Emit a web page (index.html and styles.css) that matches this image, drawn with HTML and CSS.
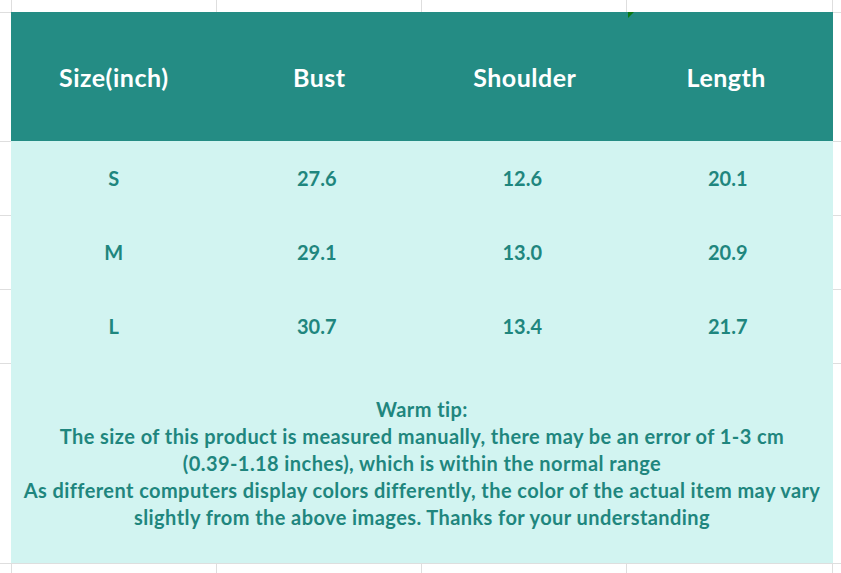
FILE: index.html
```html
<!DOCTYPE html>
<html>
<head>
<meta charset="utf-8">
<link rel="stylesheet" href="styles.css">
</head>
<body>
<div class="sheet">
  <div class="c"></div><div class="c"></div><div class="c"></div><div class="c"></div><div class="c"></div><div class="c"></div>
  <div class="c"></div>
  <div class="chart">
    <div class="row head">
      <div class="cell">Size(inch)</div>
      <div class="cell">Bust</div>
      <div class="cell">Shoulder</div>
      <div class="cell flagged">Length<span class="flag"></span></div>
    </div>
    <div class="row">
      <div class="cell">S</div><div class="cell">27.6</div><div class="cell">12.6</div><div class="cell">20.1</div>
    </div>
    <div class="row">
      <div class="cell">M</div><div class="cell">29.1</div><div class="cell">13.0</div><div class="cell">20.9</div>
    </div>
    <div class="row">
      <div class="cell">L</div><div class="cell">30.7</div><div class="cell">13.4</div><div class="cell">21.7</div>
    </div>
    <div class="tip">
      <p>Warm tip:<br>The size of this product is measured manually, there may be an error of 1-3 cm<br>(0.39-1.18 inches), which is within the normal range<br>As different computers display colors differently, the color of the actual item may vary<br>slightly from the above images. Thanks for your understanding</p>
    </div>
  </div>
  <div class="c"></div>
  <div class="c"></div><div class="c"></div>
  <div class="c"></div><div class="c"></div>
  <div class="c"></div><div class="c"></div>
  <div class="c"></div><div class="c"></div>
  <div class="c"></div><div class="c"></div><div class="c"></div><div class="c"></div><div class="c"></div><div class="c"></div>
</div>
</body>
</html>
```
FILE: styles.css
```css
html, body {
  margin: 0;
  padding: 0;
  background: #ffffff;
}
.sheet {
  display: grid;
  grid-template-columns: 11px 204px 204px 204px 205px 1fr;
  grid-template-rows: 12px 128px 73px 73px 73px 199px 1fr;
  gap: 1px;
  background: #dedede;
  width: 841px;
  height: 573px;
  overflow: hidden;
  font-family: Lato, "Noto Sans", sans-serif;
  font-weight: 700;
}
.c {
  background: #ffffff;
}
.chart {
  grid-column: 2 / 6;
  grid-row: 2 / 7;
  margin: -1px -1px 0 -1px;
  background: #d2f4f1;
  display: flex;
  flex-direction: column;
}
.row {
  display: grid;
  grid-template-columns: repeat(4, 1fr);
  height: 74px;
  color: #1f867e;
  font-size: 20px;
}
.row.head {
  height: 129px;
  background: #248c84;
  color: #ffffff;
  font-size: 25px;
  letter-spacing: 0.5px;
}
.cell {
  display: flex;
  align-items: center;
  justify-content: center;
}
.row .cell + .cell {
  padding-right: 5px;
}
.row.head .cell + .cell {
  padding-right: 0;
}
.row.head .cell.flagged {
  padding-right: 8px;
}
.flagged {
  position: relative;
}
.flag {
  position: absolute;
  left: 0;
  top: 0;
  width: 0;
  height: 0;
  border-top: 6px solid #0b7a14;
  border-right: 6px solid transparent;
}
.tip {
  flex: 1;
  display: flex;
  align-items: center;
  justify-content: center;
  color: #1f867e;
  font-size: 20px;
  letter-spacing: 0.42px;
  text-align: center;
}
.tip p {
  margin: 0;
  line-height: 27px;
}
```
